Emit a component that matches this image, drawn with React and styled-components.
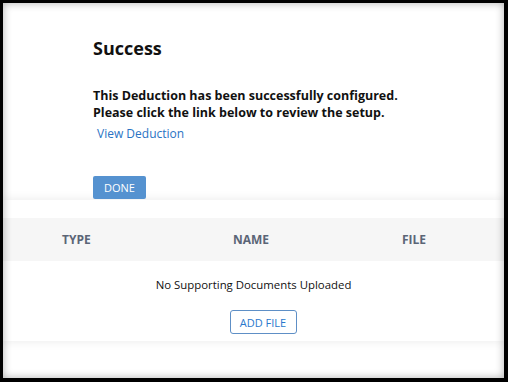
import React from 'react';
import styled, { createGlobalStyle } from 'styled-components';

const GlobalStyle = createGlobalStyle`
  body {
    margin: 0;
    font-family: "Open Sans", "Noto Sans", sans-serif;
    background: #fff;
  }
`;

const columns = ['TYPE', 'NAME', 'FILE'];

function App() {
  return (
    <>
      <GlobalStyle />
      <Frame>
        <SuccessPanel>
          <Title>Success</Title>
          <Message>
            This Deduction has been successfully configured.
            <br />
            Please click the link below to review the setup.
          </Message>
          <ViewLink href="#">View Deduction</ViewLink>
          <DoneButton type="button">DONE</DoneButton>
        </SuccessPanel>

        <DocumentsCard>
          <HeaderRow>
            {columns.map((c) => (
              <HeaderCell key={c}>{c}</HeaderCell>
            ))}
          </HeaderRow>
          <EmptyBody>
            <EmptyText>No Supporting Documents Uploaded</EmptyText>
            <AddFileButton type="button">ADD FILE</AddFileButton>
          </EmptyBody>
        </DocumentsCard>
      </Frame>
    </>
  );
}

export default App;

const Frame = styled.div`
  position: relative;
  width: 508px;
  height: 382px;
  box-sizing: border-box;
  border: 3px solid #000;
  border-right-width: 4px;
  border-bottom-width: 4px;
  background: #fff;
  overflow: hidden;

  /* soft inner shading that sits over the content */
  &::after {
    content: '';
    position: absolute;
    inset: 0;
    pointer-events: none;
    box-shadow: inset 0 0 8px rgba(0, 0, 0, 0.32);
  }
`;

const SuccessPanel = styled.section`
  display: flex;
  flex-direction: column;
  align-items: flex-start;
  padding: 33px 0 1px 90px;
`;

const Title = styled.h2`
  margin: 0;
  font-size: 18px;
  line-height: 24px;
  font-weight: 700;
  color: #111;
`;

const Message = styled.p`
  margin: 27px 0 0;
  font-size: 12.5px;
  line-height: 17px;
  font-weight: 700;
  color: #111;
`;

const ViewLink = styled.a`
  margin: 5px 0 0 4px;
  font-size: 12px;
  line-height: 16px;
  color: #2a73c4;
  text-decoration: none;
`;

const DoneButton = styled.button`
  margin-top: 34px;
  width: 53px;
  height: 23px;
  padding: 0;
  border: none;
  border-radius: 2px;
  background: #5592d0;
  color: #fff;
  font-family: inherit;
  font-size: 11px;
`;

const DocumentsCard = styled.section`
  padding-top: 18px;
  padding-bottom: 7px;
  background: #fff;
  box-shadow: 0 0 10px rgba(0, 0, 0, 0.09);
`;

const HeaderRow = styled.div`
  display: grid;
  grid-template-columns: 171px 169px 1fr;
  align-items: center;
  height: 43px;
  padding-left: 59px;
  background: #f6f6f6;
`;

const HeaderCell = styled.div`
  font-size: 12px;
  font-weight: 700;
  color: #5b6576;
`;

const EmptyBody = styled.div`
  display: flex;
  flex-direction: column;
  align-items: center;
  padding-top: 16px;
`;

const EmptyText = styled.div`
  font-size: 11.4px;
  line-height: 16px;
  color: #111;
`;

const AddFileButton = styled.button`
  margin: 17px 0 0 19px;
  width: 67px;
  height: 24px;
  padding: 0;
  border: 1px solid #5e8fc6;
  border-radius: 3px;
  background: #fff;
  color: #2a78cc;
  font-family: inherit;
  font-size: 11px;
`;
